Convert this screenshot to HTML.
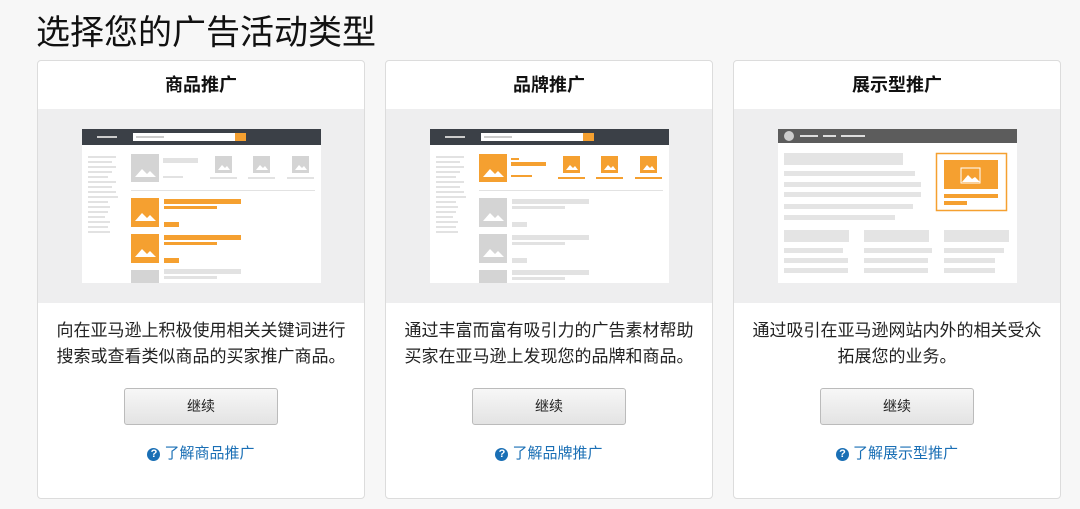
<!DOCTYPE html>
<html><head><meta charset="utf-8"><style>
body{margin:0;width:1080px;height:509px;background:#f7f7f7;font-family:"Liberation Sans","Noto Sans CJK SC",sans-serif;overflow:hidden;position:relative}
h1{position:absolute;left:36px;top:5px;margin:0;font-size:34px;font-weight:normal;color:#111}
.card{position:absolute;top:60px;width:326px;height:437px;background:#fff;border:1px solid #dcdcdc;border-radius:4px}
.hd{height:48px;line-height:48px;text-align:center;font-size:18px;font-weight:bold;color:#111}
.img{height:194px;background:#eeeeef;position:relative}
.img svg{position:absolute;left:44px;top:20px}
.txt{text-align:center;font-size:17px;line-height:26px;color:#222;margin-top:15px;height:53px;white-space:nowrap}
.btn{margin:17px auto 0;width:152px;height:35px;border:1px solid #bbb;border-radius:3px;background:linear-gradient(#f7f7f7,#e3e3e3);text-align:center;line-height:35px;font-size:14px;color:#222}
.lk{text-align:center;margin-top:17px;font-size:15px;color:#1a6fb5}
.q{display:inline-block;width:13px;height:13px;border-radius:50%;background:#1a6fb5;color:#fff;font-size:11px;font-weight:bold;line-height:13px;text-align:center;vertical-align:1px;margin-right:4px}
</style></head><body>
<h1>选择您的广告活动类型</h1>

<div class="card" style="left:37px">
<div class="hd">商品推广</div>
<div class="img">
<svg width="239" height="154" viewBox="0 0 239 154">
<rect width="239" height="154" fill="#fff"/>
<rect width="239" height="16" fill="#3b4047"/>
<rect x="15" y="7" width="20" height="2" fill="#ccc"/>
<rect x="51" y="4" width="102" height="8" fill="#fff"/><rect x="54" y="7" width="28" height="2" fill="#ccc"/>
<rect x="153" y="4" width="11" height="8" fill="#f5a030"/>
<g fill="#e2e2e2">
<rect x="6" y="27" width="28" height="2"/><rect x="6" y="32" width="24" height="2"/><rect x="6" y="37" width="28" height="2"/><rect x="6" y="42" width="24" height="2"/><rect x="6" y="47" width="20" height="2"/><rect x="6" y="52" width="28" height="2"/><rect x="6" y="57" width="24" height="2"/><rect x="6" y="62" width="28" height="2"/><rect x="6" y="67" width="30" height="2"/><rect x="6" y="72" width="20" height="2"/><rect x="6" y="77" width="22" height="2"/><rect x="6" y="82" width="20" height="2"/><rect x="6" y="87" width="17" height="2"/><rect x="6" y="92" width="22" height="2"/><rect x="6" y="97" width="20" height="2"/><rect x="6" y="102" width="22" height="2"/>
<rect x="81" y="29" width="35" height="5"/><rect x="81" y="47" width="20" height="2"/>
<rect x="128" y="48" width="27" height="2"/><rect x="166" y="48" width="27" height="2"/><rect x="205" y="48" width="27" height="2"/>
<rect x="49" y="61" width="184" height="1"/>
<rect x="82" y="140" width="77" height="5"/><rect x="82" y="147" width="53" height="3"/>
</g>
<g fill="#d4d4d4"><rect x="49" y="25" width="28" height="28"/><rect x="133" y="27" width="17" height="17"/><rect x="171" y="27" width="17" height="17"/><rect x="210" y="27" width="17" height="17"/><rect x="49" y="141" width="28" height="20"/></g>
<g fill="#f5a030"><rect x="49" y="69" width="28" height="29"/><rect x="82" y="70" width="77" height="5"/><rect x="82" y="77" width="53" height="3"/><rect x="82" y="93" width="15" height="5"/>
<rect x="49" y="105" width="28" height="29"/><rect x="82" y="106" width="77" height="5"/><rect x="82" y="113" width="53" height="3"/><rect x="82" y="129" width="15" height="5"/></g>
<g fill="#fff"><path d="M53 48l7-8 5 5 3-3 6 6z"/><path d="M53 92l7-8 5 5 3-3 6 6z"/><path d="M53 128l7-8 5 5 3-3 6 6z"/><path d="M136 41l4-5 3 3 2-2 3 4z"/><path d="M174 41l4-5 3 3 2-2 3 4z"/><path d="M213 41l4-5 3 3 2-2 3 4z"/></g>
</svg>
</div>
<div class="txt">向在亚马逊上积极使用相关关键词进行<br>搜索或查看类似商品的买家推广商品。</div>
<div class="btn">继续</div>
<div class="lk"><span class="q">?</span>了解商品推广</div>
</div>

<div class="card" style="left:385px">
<div class="hd">品牌推广</div>
<div class="img">
<svg width="239" height="154" viewBox="0 0 239 154">
<rect width="239" height="154" fill="#fff"/>
<rect width="239" height="16" fill="#3b4047"/>
<rect x="15" y="7" width="20" height="2" fill="#ccc"/>
<rect x="51" y="4" width="102" height="8" fill="#fff"/><rect x="54" y="7" width="28" height="2" fill="#ccc"/>
<rect x="153" y="4" width="11" height="8" fill="#f5a030"/>
<g fill="#e2e2e2">
<rect x="6" y="27" width="28" height="2"/><rect x="6" y="32" width="24" height="2"/><rect x="6" y="37" width="28" height="2"/><rect x="6" y="42" width="24" height="2"/><rect x="6" y="47" width="20" height="2"/><rect x="6" y="52" width="28" height="2"/><rect x="6" y="57" width="24" height="2"/><rect x="6" y="62" width="28" height="2"/><rect x="6" y="67" width="30" height="2"/><rect x="6" y="72" width="20" height="2"/><rect x="6" y="77" width="22" height="2"/><rect x="6" y="82" width="20" height="2"/><rect x="6" y="87" width="17" height="2"/><rect x="6" y="92" width="22" height="2"/><rect x="6" y="97" width="20" height="2"/><rect x="6" y="102" width="22" height="2"/>
<rect x="49" y="61" width="184" height="1"/>
<rect x="82" y="70" width="77" height="5"/><rect x="82" y="77" width="53" height="3"/><rect x="82" y="93" width="15" height="5"/>
<rect x="82" y="106" width="77" height="5"/><rect x="82" y="113" width="53" height="3"/><rect x="82" y="129" width="15" height="5"/>
<rect x="82" y="141" width="77" height="5"/><rect x="82" y="148" width="53" height="3"/>
</g>
<g fill="#d4d4d4"><rect x="49" y="69" width="28" height="29"/><rect x="49" y="105" width="28" height="29"/><rect x="49" y="141" width="28" height="20"/></g>
<g fill="#f5a030"><rect x="49" y="25" width="28" height="28"/><rect x="81" y="29" width="8" height="2"/><rect x="81" y="33" width="35" height="4"/><rect x="81" y="46" width="21" height="2"/>
<rect x="133" y="27" width="17" height="17"/><rect x="171" y="27" width="17" height="17"/><rect x="210" y="27" width="17" height="17"/>
<rect x="128" y="48" width="27" height="2"/><rect x="166" y="48" width="27" height="2"/><rect x="205" y="48" width="27" height="2"/></g>
<g fill="#fff"><path d="M53 48l7-8 5 5 3-3 6 6z"/><path d="M53 92l7-8 5 5 3-3 6 6z"/><path d="M53 128l7-8 5 5 3-3 6 6z"/><path d="M136 41l4-5 3 3 2-2 3 4z"/><path d="M174 41l4-5 3 3 2-2 3 4z"/><path d="M213 41l4-5 3 3 2-2 3 4z"/></g>
</svg>
</div>
<div class="txt">通过丰富而富有吸引力的广告素材帮助<br>买家在亚马逊上发现您的品牌和商品。</div>
<div class="btn">继续</div>
<div class="lk"><span class="q">?</span>了解品牌推广</div>
</div>

<div class="card" style="left:733px">
<div class="hd">展示型推广</div>
<div class="img">
<svg width="239" height="154" viewBox="0 0 239 154">
<rect width="239" height="154" fill="#fff"/>
<rect width="239" height="14" fill="#5c5c5c"/>
<circle cx="11" cy="7" r="5" fill="#ccc"/>
<g fill="#ddd"><rect x="22" y="6" width="18" height="2"/><rect x="45" y="6" width="13" height="2"/><rect x="63" y="6" width="24" height="2"/></g>
<g fill="#e4e4e4">
<rect x="6" y="24" width="119" height="12"/>
<rect x="6" y="42" width="131" height="5"/><rect x="6" y="53" width="137" height="5"/><rect x="6" y="63" width="137" height="5"/><rect x="6" y="75" width="129" height="5"/><rect x="6" y="86" width="111" height="5"/>
<rect x="6" y="101" width="65" height="12"/><rect x="86" y="101" width="65" height="12"/><rect x="166" y="101" width="65" height="12"/>
<rect x="6" y="119" width="59" height="5"/><rect x="6" y="129" width="64" height="5"/><rect x="6" y="139" width="64" height="5"/>
<rect x="86" y="119" width="68" height="5"/><rect x="86" y="129" width="64" height="5"/><rect x="86" y="139" width="64" height="5"/>
<rect x="166" y="119" width="60" height="5"/><rect x="166" y="129" width="51" height="5"/><rect x="166" y="139" width="51" height="5"/>
</g>
<rect x="158.5" y="24.5" width="70" height="57" fill="none" stroke="#f5a030" stroke-width="1.5"/>
<g fill="#f5a030"><rect x="166" y="31" width="54" height="29"/><rect x="166" y="65" width="54" height="4"/><rect x="166" y="72" width="23" height="4"/></g>
<rect x="183" y="39" width="19" height="15" fill="none" stroke="#fff" stroke-width="1"/>
<path d="M184 53l6-7 4 4 3-2 5 5z" fill="#fff"/>
</svg>
</div>
<div class="txt">通过吸引在亚马逊网站内外的相关受众<br>拓展您的业务。</div>
<div class="btn">继续</div>
<div class="lk"><span class="q">?</span>了解展示型推广</div>
</div>
</body></html>
